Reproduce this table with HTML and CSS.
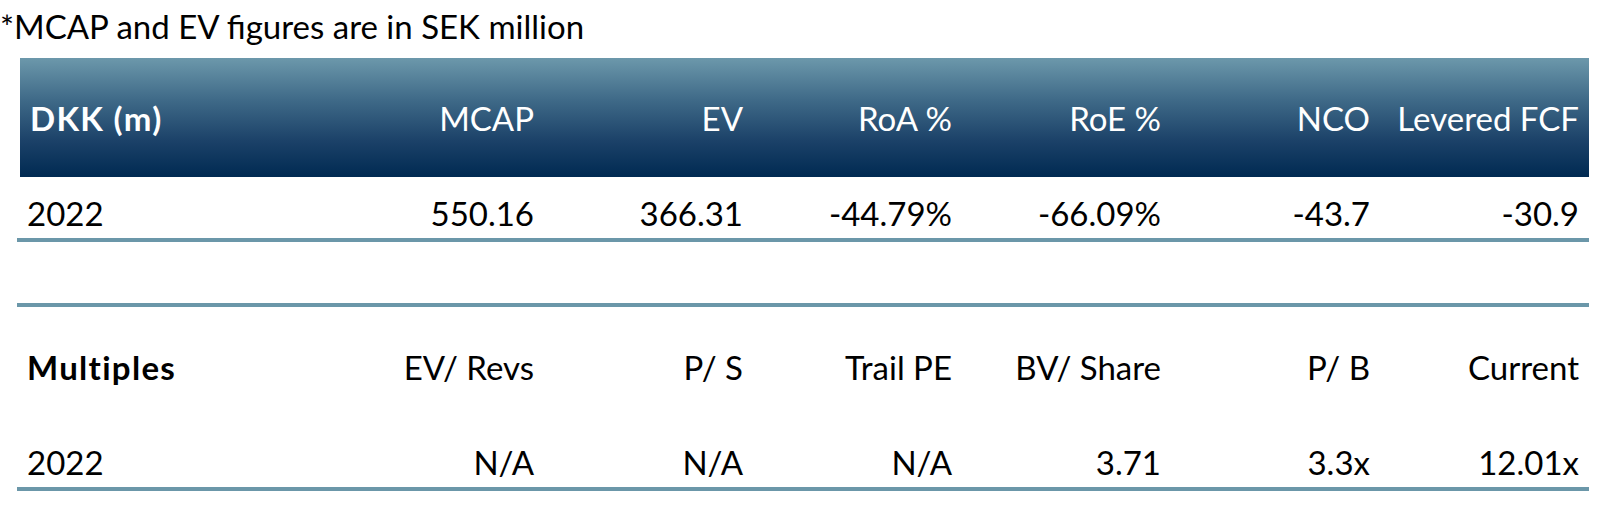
FILE: index.html
```html
<!DOCTYPE html>
<html>
<head>
<meta charset="utf-8">
<link rel="stylesheet" href="styles.css">
</head>
<body>
<div class="caption">*MCAP and EV figures are in SEK million</div>
<div class="table t1">
  <div class="hdr">
    <div class="cell label bold">DKK (m)</div>
    <div class="cell">MCAP</div>
    <div class="cell">EV</div>
    <div class="cell">RoA %</div>
    <div class="cell">RoE %</div>
    <div class="cell">NCO</div>
    <div class="cell">Levered FCF</div>
  </div>
  <div class="row data1">
    <div class="cell label">2022</div>
    <div class="cell">550.16</div>
    <div class="cell">366.31</div>
    <div class="cell">-44.79%</div>
    <div class="cell">-66.09%</div>
    <div class="cell">-43.7</div>
    <div class="cell">-30.9</div>
  </div>
</div>
<div class="table t2">
  <div class="row hdr2">
    <div class="cell label bold">Multiples</div>
    <div class="cell">EV/ Revs</div>
    <div class="cell">P/ S</div>
    <div class="cell">Trail PE</div>
    <div class="cell">BV/ Share</div>
    <div class="cell">P/ B</div>
    <div class="cell">Current</div>
  </div>
  <div class="row data2">
    <div class="cell label">2022</div>
    <div class="cell">N/A</div>
    <div class="cell">N/A</div>
    <div class="cell">N/A</div>
    <div class="cell">3.71</div>
    <div class="cell">3.3x</div>
    <div class="cell">12.01x</div>
  </div>
</div>
</body>
</html>
```

FILE: styles.css
```css
html, body {
  margin: 0;
  padding: 0;
  background: #ffffff;
}
body {
  font-family: Lato, "Liberation Sans", sans-serif;
  font-size: 33px;
  line-height: 40px;
  color: #000000;
  width: 1602px;
}
.caption {
  height: 58px;
  padding-top: 6px;
  box-sizing: border-box;
  white-space: nowrap;
}
.table {
  margin-left: 17px;
  width: 1572px;
}
.hdr {
  margin-left: 3px;
  height: 119px;
  box-sizing: border-box;
  padding-top: 40px;
  display: grid;
  grid-template-columns: 315px repeat(6, 209px);
  color: #ffffff;
  background: linear-gradient(to bottom, #6c98ab 0%, #3f6a88 35%, #1b4168 70%, #002a52 100%);
}
.hdr .label {
  padding-left: 9px;
}
.row {
  display: grid;
  grid-template-columns: 318px repeat(6, 209px);
  box-sizing: border-box;
}
.cell {
  text-align: right;
  padding-right: 10px;
  white-space: nowrap;
}
.cell.label {
  text-align: left;
  padding-left: 10px;
}
.bold {
  font-weight: 700;
  letter-spacing: 1.3px;
}
.data1 {
  height: 65px;
  padding-top: 16px;
  border-bottom: 4px solid #6b97a9;
}
.t2 {
  margin-top: 61px;
  border-top: 4px solid #6b97a9;
}
.hdr2 {
  height: 95px;
  padding-top: 40px;
}
.data2 {
  height: 89px;
  padding-top: 40px;
  border-bottom: 4px solid #6b97a9;
}
```
